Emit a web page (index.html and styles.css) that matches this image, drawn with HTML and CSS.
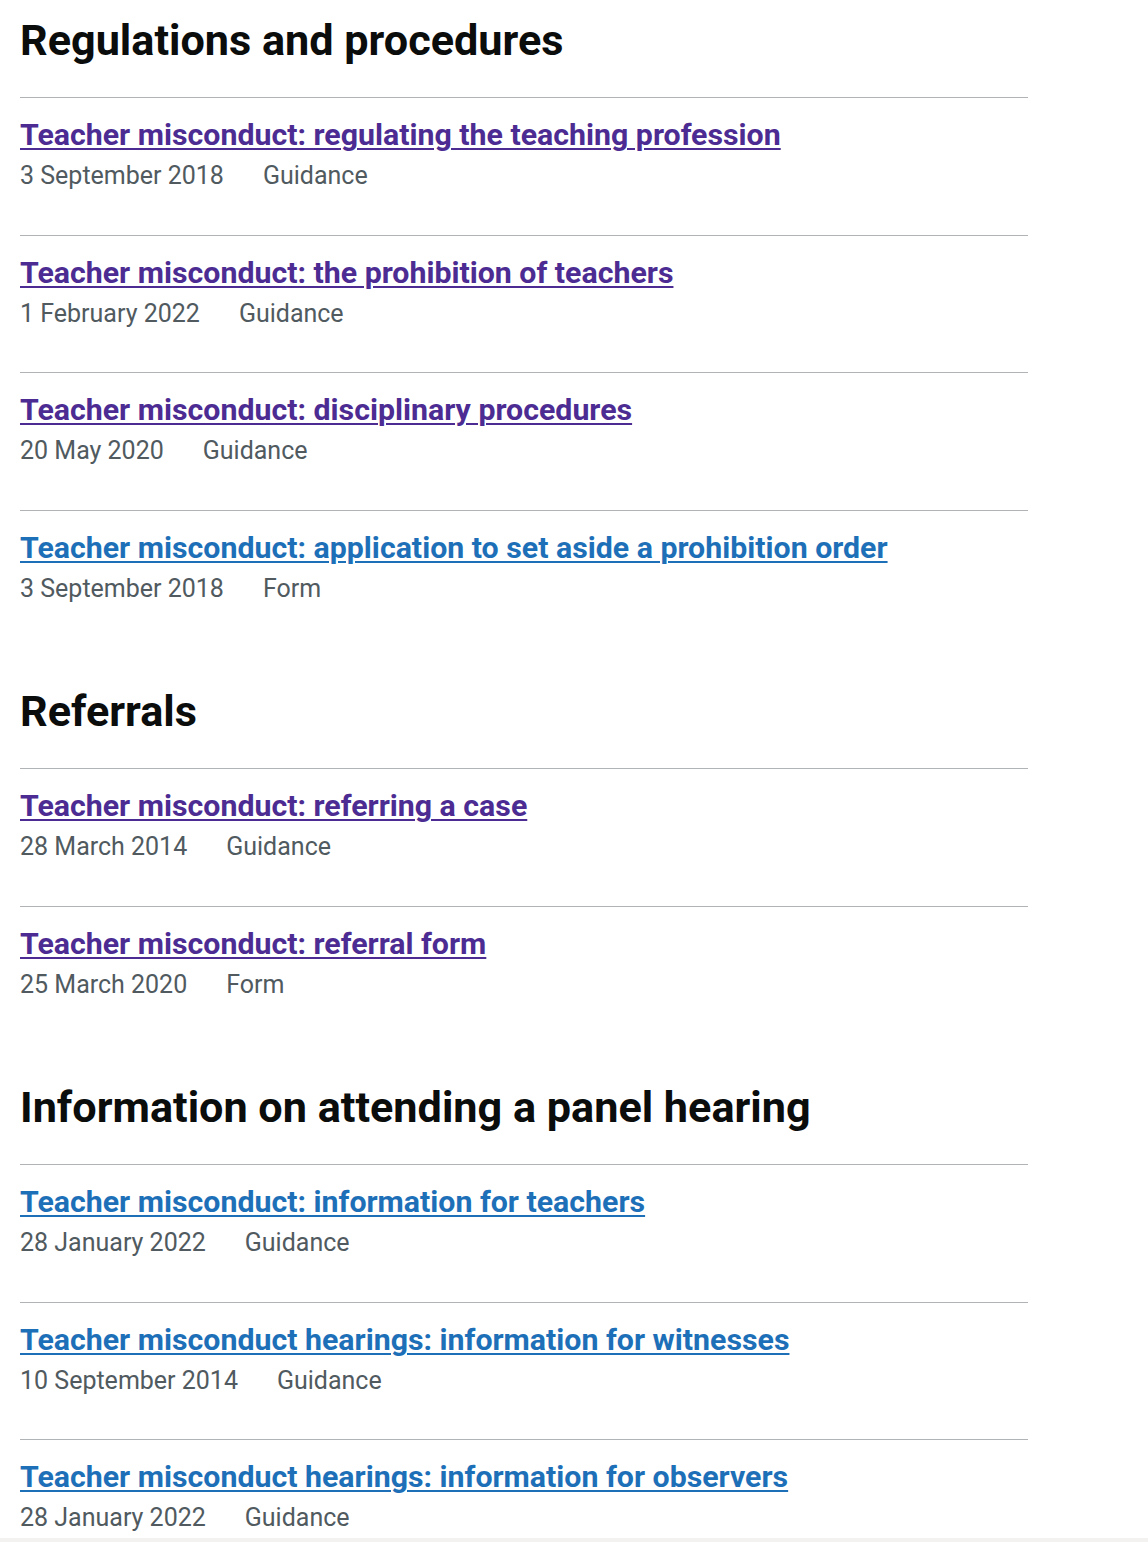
FILE: index.html
```html
<!DOCTYPE html>
<html lang="en">
<head>
<meta charset="utf-8">
<title>Teacher misconduct</title>
<link rel="stylesheet" href="styles.css">
</head>
<body>
<main class="page">
  <section class="group">
    <h2 class="group__title">Regulations and procedures</h2>
    <ul class="doc-list">
      <li class="doc">
        <a class="doc__link doc__link--visited" href="#">Teacher misconduct: regulating the teaching profession</a>
        <ul class="doc__meta"><li>3 September 2018</li><li>Guidance</li></ul>
      </li>
      <li class="doc">
        <a class="doc__link doc__link--visited" href="#">Teacher misconduct: the prohibition of teachers</a>
        <ul class="doc__meta"><li>1 February 2022</li><li>Guidance</li></ul>
      </li>
      <li class="doc">
        <a class="doc__link doc__link--visited" href="#">Teacher misconduct: disciplinary procedures</a>
        <ul class="doc__meta"><li>20 May 2020</li><li>Guidance</li></ul>
      </li>
      <li class="doc">
        <a class="doc__link" href="#">Teacher misconduct: application to set aside a prohibition order</a>
        <ul class="doc__meta"><li>3 September 2018</li><li>Form</li></ul>
      </li>
    </ul>
  </section>

  <section class="group">
    <h2 class="group__title">Referrals</h2>
    <ul class="doc-list">
      <li class="doc">
        <a class="doc__link doc__link--visited" href="#">Teacher misconduct: referring a case</a>
        <ul class="doc__meta"><li>28 March 2014</li><li>Guidance</li></ul>
      </li>
      <li class="doc">
        <a class="doc__link doc__link--visited" href="#">Teacher misconduct: referral form</a>
        <ul class="doc__meta"><li>25 March 2020</li><li>Form</li></ul>
      </li>
    </ul>
  </section>

  <section class="group group--last">
    <h2 class="group__title">Information on attending a panel hearing</h2>
    <ul class="doc-list">
      <li class="doc">
        <a class="doc__link" href="#">Teacher misconduct: information for teachers</a>
        <ul class="doc__meta"><li>28 January 2022</li><li>Guidance</li></ul>
      </li>
      <li class="doc">
        <a class="doc__link" href="#">Teacher misconduct hearings: information for witnesses</a>
        <ul class="doc__meta"><li>10 September 2014</li><li>Guidance</li></ul>
      </li>
      <li class="doc">
        <a class="doc__link" href="#">Teacher misconduct hearings: information for observers</a>
        <ul class="doc__meta"><li>28 January 2022</li><li>Guidance</li></ul>
      </li>
    </ul>
  </section>
</main>
<footer class="footer"></footer>
</body>
</html>
```
FILE: styles.css
```css
html, body {
  margin: 0;
  padding: 0;
  background: #ffffff;
}

body {
  font-family: Roboto, "Liberation Sans", Arial, sans-serif;
  color: #0b0c0c;
}

.page {
  width: 1008px;
  padding: 16px 20px 0;
}

.group {
  margin-bottom: 40px;
}

.group--last {
  margin-bottom: 0;
}

.group__title {
  margin: 0 0 31px;
  font-size: 43.2px;
  line-height: 50px;
  font-weight: 700;
  color: #0b0c0c;
}

.doc-list {
  list-style: none;
  margin: 0;
  padding: 0;
}

.doc {
  border-top: 1px solid #b1b4b6;
  padding: 19px 0 43.5px;
}

.group--last .doc:last-child {
  padding-bottom: 5px;
}

.doc__link {
  display: inline-block;
  font-size: 30.3px;
  line-height: 36px;
  font-weight: 700;
  color: #1d70b8;
  text-decoration: underline;
  text-decoration-thickness: 2px;
  text-underline-offset: 3px;
}

.doc__link--visited {
  color: #4c2c92;
}

.doc__meta {
  list-style: none;
  margin: 8px 0 0;
  padding: 0;
  display: flex;
  gap: 39px;
  font-size: 25px;
  line-height: 30px;
  color: #505a5f;
}

.footer {
  background: #f3f2f1;
  height: 40px;
}
```
